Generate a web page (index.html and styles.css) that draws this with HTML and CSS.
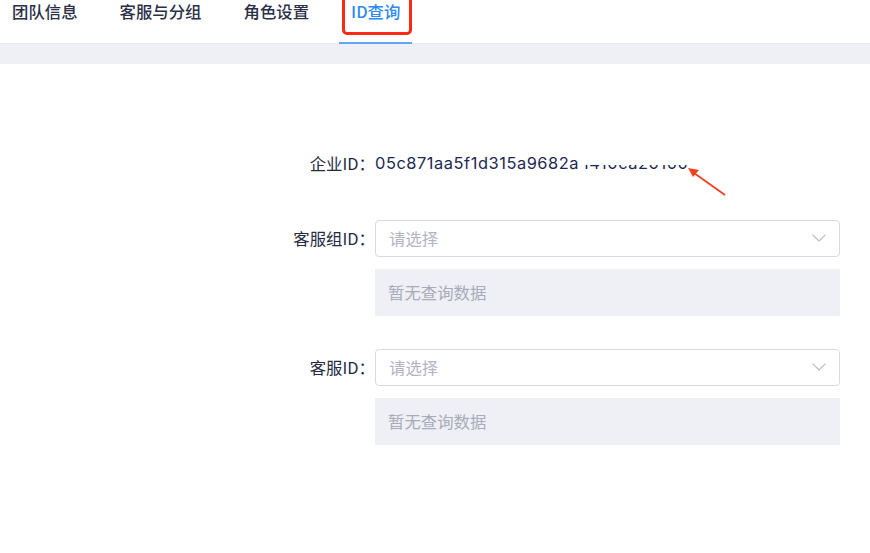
FILE: index.html
```html
<!DOCTYPE html>
<html lang="zh-CN">
<head>
<meta charset="utf-8">
<title>ID查询</title>
<link rel="stylesheet" href="styles.css">
</head>
<body>
<header class="tabs">
  <div class="tab">团队信息</div>
  <div class="tab">客服与分组</div>
  <div class="tab">角色设置</div>
  <div class="tab active">ID查询<span class="mark"></span></div>
</header>
<div class="band"></div>
<main class="main">
  <div class="form">
    <div class="label plain">企业ID：</div>
    <div class="value">05c871aa5f1d315a9682a<span class="hidden-part">1410ca20100</span></div>

    <div class="label">客服组ID：</div>
    <div class="field">
      <div class="select"><span class="placeholder">请选择</span>
        <svg class="chev" width="14" height="8" viewBox="0 0 14 8"><path d="M0.5 0.6 L7 7 L13.5 0.6" fill="none" stroke="#b6b8c4" stroke-width="1.1"/></svg>
      </div>
      <div class="empty">暂无查询数据</div>
    </div>

    <div class="label second">客服ID：</div>
    <div class="field second">
      <div class="select"><span class="placeholder">请选择</span>
        <svg class="chev" width="14" height="8" viewBox="0 0 14 8"><path d="M0.5 0.6 L7 7 L13.5 0.6" fill="none" stroke="#b6b8c4" stroke-width="1.1"/></svg>
      </div>
      <div class="empty">暂无查询数据</div>
    </div>
  </div>
  <svg class="arrow" width="40" height="30" viewBox="0 0 40 30">
    <line x1="38" y1="28" x2="7" y2="6" stroke="#f0401f" stroke-width="1.8"/>
    <polygon points="1,1 12,3 6,10" fill="#f0401f"/>
  </svg>
</main>
</body>
</html>
```

FILE: styles.css
```css
* { box-sizing: border-box; }
html, body { margin: 0; padding: 0; background: #fff; }
body {
  font-family: Inter, "Noto Sans CJK SC", sans-serif;
  font-size: 16.4px;
  color: #262a44;
  width: 870px;
  height: 553px;
  overflow: hidden;
}
.tabs {
  display: flex;
  gap: 18px;
  height: 44px;
  border-bottom: 1px solid #e9eaf0;
}
.tab {
  position: relative;
  height: 44px;
  padding: 0 12px;
  line-height: 22px;
  color: #2b2f48;
  font-family: "Noto Sans CJK SC", sans-serif;
  font-weight: 500;
}
.tab.active {
  color: #2b8bf2;
  border-bottom: 2px solid #5ea6f6;
}
.mark {
  position: absolute;
  top: -8px;
  left: 3px;
  right: 0;
  bottom: 7px;
  border: 3px solid #fa2a14;
  border-radius: 5px;
}
.band {
  height: 20px;
  background: #eff0f5;
}
.main {
  position: relative;
  padding-top: 87px;
}
.form {
  display: grid;
  grid-template-columns: 375px 465px;
  row-gap: 45px;
}
.label {
  text-align: right;
  line-height: 37px;
  color: #262a44;
  font-family: "Noto Sans CJK SC", sans-serif;
}
.label.plain, .value { line-height: 24px; }
.value {
  color: #1c2754;
  font-size: 16.4px;
  letter-spacing: 0.55px;
}
.hidden-part {
  display: inline-block;
  margin-left: 3px;
  clip-path: inset(58% 0 0 0);
}
.field {
  display: flex;
  flex-direction: column;
  gap: 12px;
}
.second { margin-top: -12px; }
.select {
  height: 37px;
  border: 1px solid #d8dae2;
  border-radius: 4px;
  display: flex;
  align-items: center;
  justify-content: space-between;
  padding: 0 13px 2px 13px;
}
.placeholder {
  color: #b2b5c1;
  font-family: "Noto Sans CJK SC", sans-serif;
}
.chev { display: block; }
.empty {
  height: 47px;
  line-height: 46px;
  background: #eff0f5;
  padding-left: 13px;
  color: #a8abba;
  font-family: "Noto Sans CJK SC", sans-serif;
}
.arrow {
  position: absolute;
  left: 687px;
  top: 103px;
}
```
